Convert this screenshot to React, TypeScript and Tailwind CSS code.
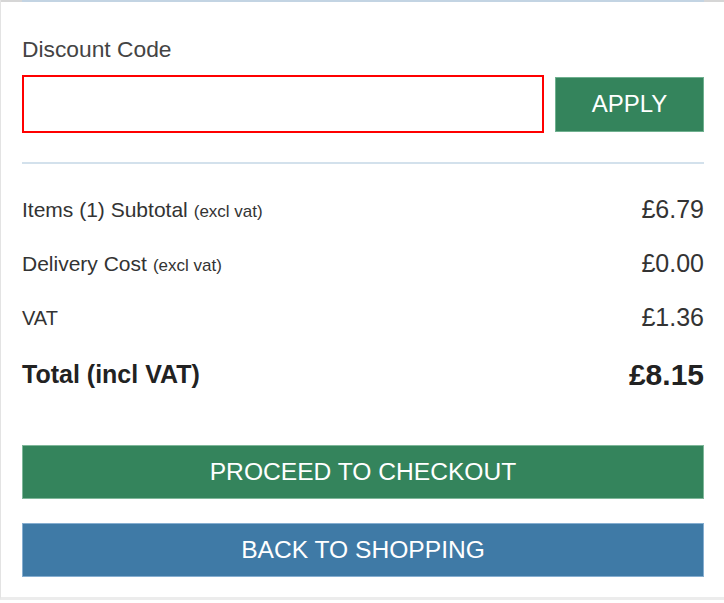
import React, { useState } from 'react';

type Line = { label: string; note?: string; amount: string; small?: boolean };

const lines: Line[] = [
  { label: 'Items (1) Subtotal', note: '(excl vat)', amount: '£6.79' },
  { label: 'Delivery Cost', note: '(excl vat)', amount: '£0.00' },
  { label: 'VAT', amount: '£1.36', small: true },
];

const App: React.FC = () => {
  const [code, setCode] = useState('');

  return (
    <div className="h-[603px] w-[724px] bg-white font-['Liberation_Sans',Arial,sans-serif] text-[#333]">
      <div className="flex h-[600px] flex-col border-b-[3px] border-l border-[#e3e3e3] border-b-[#ececec]">
        {/* divider from the block above */}
        <div className="flex h-[2px] bg-[#d6d6d6] pl-[21px] pr-[20px]">
          <div className="h-[2px] flex-1 bg-[#c3d4e3]" />
        </div>

        <div className="flex flex-col pl-[21px] pr-[20px]">
          <label htmlFor="discount" className="mt-[34px] text-[22.8px] leading-[26px] text-[#444]">
            Discount Code
          </label>
          <div className="mt-[13px] flex items-center gap-[11px]">
            <input
              id="discount"
              value={code}
              onChange={(e) => setCode(e.target.value)}
              className="h-[58px] w-[522px] border-2 border-[#ff0000] bg-white px-3 text-[20px] outline-none"
            />
            <button className="h-[55px] flex-1 border border-[#6fb08f] bg-[#34845c] text-[24px] text-white">
              APPLY
            </button>
          </div>

          <div className="mt-[29px] h-[2px] bg-[#d3e1ec]" />

          <div className="mt-[33px] flex flex-col gap-[29px]">
            {lines.map((l) => (
              <div key={l.label} className="flex h-[25px] items-center justify-between">
                <span className={l.small ? 'text-[20px]' : 'text-[21px]'}>
                  {l.label}
                  {l.note && <span className="ml-[6px] text-[17px]">{l.note}</span>}
                </span>
                <span className="text-[25px]">{l.amount}</span>
              </div>
            ))}
            <div className="mt-[2px] flex h-[27px] items-center justify-between font-bold text-[#222]">
              <span className="text-[25px]">Total (incl VAT)</span>
              <span className="text-[30px]">£8.15</span>
            </div>
          </div>

          <button className="mt-[57px] h-[54px] w-full border border-[#7fb79a] bg-[#34845c] text-[24.6px] text-white">
            PROCEED TO CHECKOUT
          </button>
          <button className="mt-[24px] h-[54px] w-full border border-[#86aed0] bg-[#3f7aa6] text-[24.6px] text-white">
            BACK TO SHOPPING
          </button>
        </div>
      </div>
    </div>
  );
};

export default App;
